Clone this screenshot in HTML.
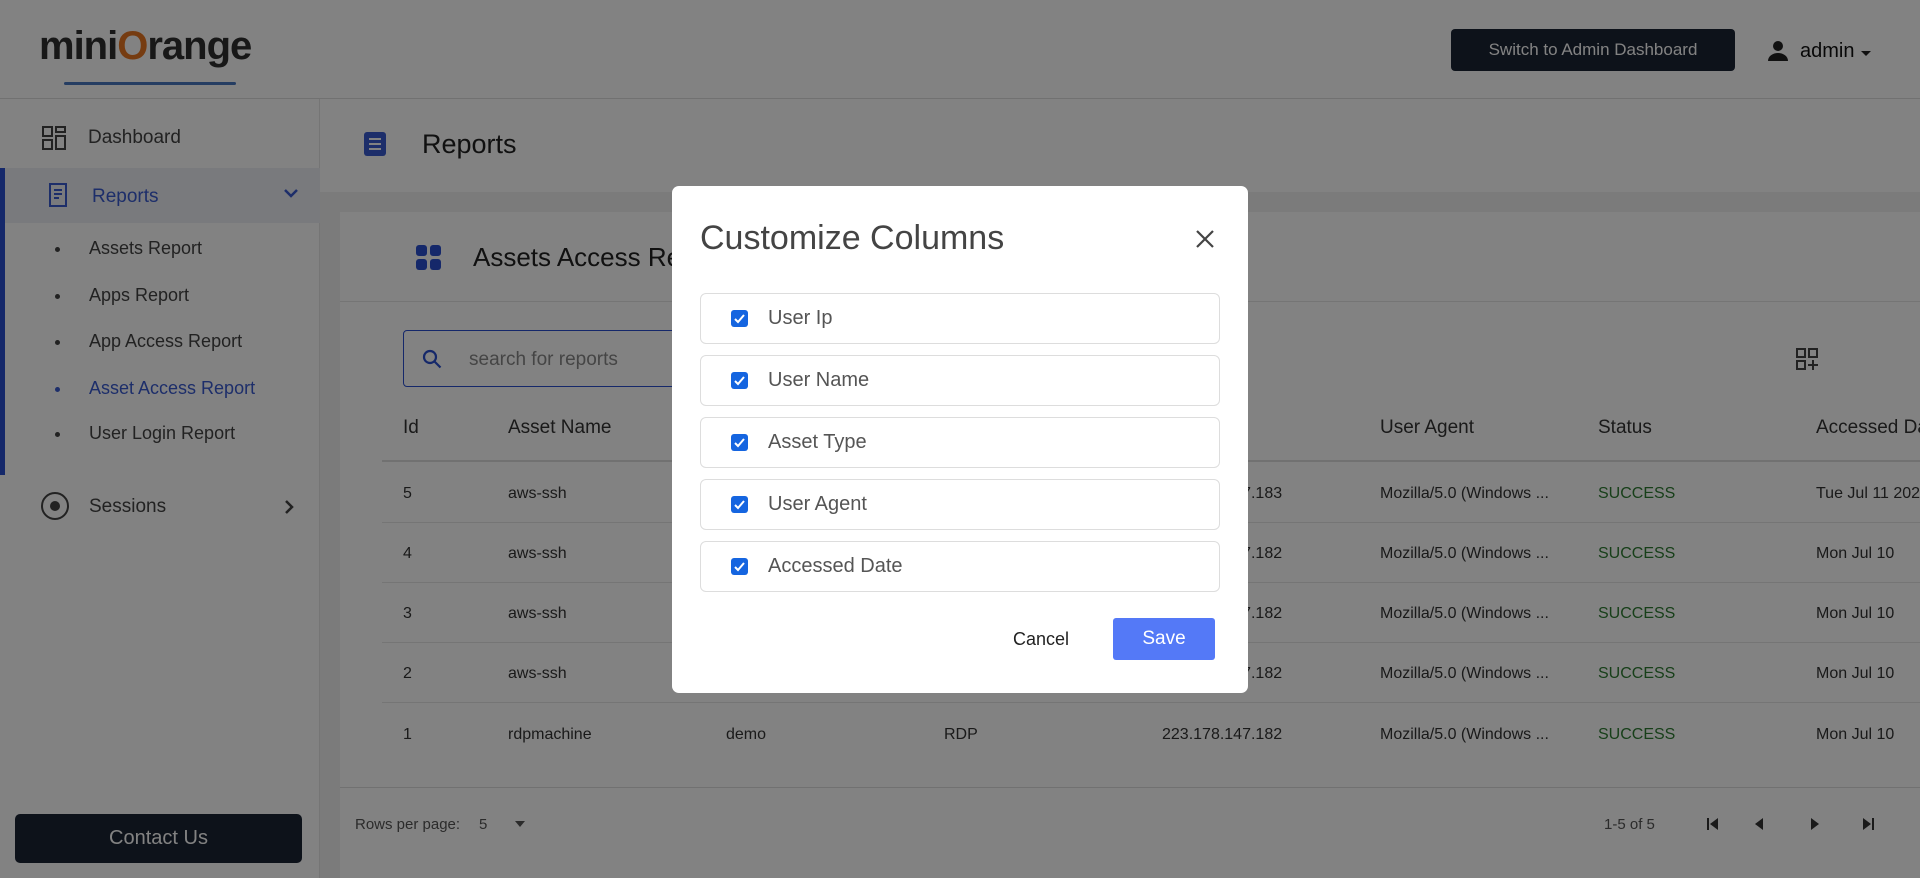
<!DOCTYPE html>
<html><head><meta charset="utf-8"><style>
*{box-sizing:border-box;margin:0;padding:0}
body{width:1920px;height:878px;overflow:hidden;position:relative;background:#fff;font-family:"Liberation Sans",sans-serif;color:#333}
.a{position:absolute}
.hdr{left:0;top:0;width:1920px;height:99px;background:#fff;border-bottom:1px solid #ddd}
.side{left:0;top:99px;width:320px;height:779px;background:#fff;border-right:1px solid #e6e6e6}
.main{left:320px;top:99px;width:1600px;height:779px;background:#f2f2f2}
.si{font-size:18px;color:#444;white-space:nowrap}
.dot{width:5px;height:5px;border-radius:50%;background:#444}
.th{font-size:19px;color:#333;white-space:nowrap}
.td{font-size:16px;color:#333;white-space:nowrap}
.ok{color:#2e7d32}
.line{height:1px;background:#e5e5e5}
.ov{left:0;top:0;width:1920px;height:878px;background:rgba(0,0,0,0.49)}
.modal{left:672px;top:186px;width:576px;height:507px;background:#fff;border-radius:7px}
.it{left:28px;width:520px;height:51px;border:1px solid #ddd;border-radius:6px}
.cb{left:30px;top:16px;width:17px;height:17px;background:#1565e0;border-radius:3px}
.it span{position:absolute;left:67px;top:13px;font-size:20px;color:#555}
</style></head><body>
<div class="a hdr">
 <div class="a" style="left:39px;top:24px;font-size:40px;font-weight:bold;color:#2f2f2f;letter-spacing:-1px">mini<span style="color:#e87722">O</span>range</div>
 <div class="a" style="left:64px;top:82px;width:172px;height:3px;background:#4a78c0;border-radius:2px"></div>
 <div class="a" style="left:1451px;top:29px;width:284px;height:42px;background:#1b2434;border-radius:4px;color:#fff;font-size:17px;text-align:center;line-height:42px">Switch to Admin Dashboard</div>
 <svg class="a" style="left:1766px;top:39px" width="24" height="24" viewBox="0 0 24 24"><circle cx="12" cy="7" r="5" fill="#222"/><path d="M2 22c0-5 5-8 10-8s10 3 10 8z" fill="#222"/></svg>
 <div class="a" style="left:1800px;top:40px;font-size:20px;color:#111">admin</div>
 <div class="a" style="left:1861px;top:51px;border:5px solid transparent;border-top:5px solid #222"></div>
</div>
<div class="a side">
 <svg class="a" style="left:42px;top:27px" width="24" height="24" viewBox="0 0 24 24" fill="none" stroke="#444" stroke-width="2"><rect x="1" y="1" width="9" height="9"/><rect x="14" y="1" width="9" height="5"/><rect x="14" y="10" width="9" height="13"/><rect x="1" y="14" width="9" height="9"/></svg>
 <div class="a si" style="left:88px;top:28px;font-size:19px">Dashboard</div>
 <div class="a" style="left:0;top:69px;width:320px;height:55px;background:#eef0f6"></div>
 <div class="a" style="left:0;top:69px;width:5px;height:307px;background:#2a4fd0"></div>
 <svg class="a" style="left:48px;top:84px" width="20" height="24" viewBox="0 0 20 24" fill="none" stroke="#3a5bd0" stroke-width="2"><path d="M2 1h16v22H2z M6 7h8 M6 11h8 M6 15h5"/></svg>
 <div class="a si" style="left:92px;top:87px;font-size:19px;color:#3a5bd0">Reports</div>
 <svg class="a" style="left:283px;top:88px" width="16" height="12" viewBox="0 0 16 12" fill="none" stroke="#3a5bd0" stroke-width="2.5"><path d="M2 3l6 6 6-6"/></svg>
 <div class="a dot" style="left:55px;top:148px"></div><div class="a si" style="left:89px;top:139px">Assets Report</div>
 <div class="a dot" style="left:55px;top:195px"></div><div class="a si" style="left:89px;top:186px">Apps Report</div>
 <div class="a dot" style="left:55px;top:241px"></div><div class="a si" style="left:89px;top:232px">App Access Report</div>
 <div class="a dot" style="left:55px;top:288px;background:#3a5bd0"></div><div class="a si" style="left:89px;top:279px;color:#3a5bd0">Asset Access Report</div>
 <div class="a dot" style="left:55px;top:333px"></div><div class="a si" style="left:89px;top:324px">User Login Report</div>
 <div class="a" style="left:41px;top:393px;width:28px;height:28px;border:2.5px solid #444;border-radius:50%"></div>
 <div class="a" style="left:50px;top:402px;width:10px;height:10px;background:#444;border-radius:50%"></div>
 <div class="a si" style="left:89px;top:397px;font-size:19px">Sessions</div>
 <svg class="a" style="left:283px;top:400px" width="12" height="16" viewBox="0 0 12 16" fill="none" stroke="#444" stroke-width="2.5"><path d="M3 2l6 6-6 6"/></svg>
 <div class="a" style="left:15px;top:715px;width:287px;height:49px;background:#1b2434;border-radius:5px;color:#fff;font-size:20px;text-align:center;line-height:49px">Contact Us</div>
</div>
<div class="a main">
 <div class="a" style="left:0;top:0;width:1600px;height:93px;background:#fff"></div>
 <div class="a" style="left:44px;top:33px;width:22px;height:24px;background:#3a5bd0;border-radius:3px"></div>
 <div class="a" style="left:49px;top:39px;width:12px;height:2px;background:#fff;box-shadow:0 5px 0 #fff,0 10px 0 #fff"></div>
 <div class="a" style="left:102px;top:30px;font-size:27px;color:#222">Reports</div>
 <div class="a" style="left:20px;top:113px;width:1600px;height:680px;background:#fff">
  <svg class="a" style="left:76px;top:33px" width="26" height="26" viewBox="0 0 26 26" fill="#2a4fd0"><rect x="0" y="0" width="11" height="11" rx="3"/><rect x="14" y="0" width="11" height="11" rx="3"/><rect x="0" y="14" width="11" height="11" rx="3"/><rect x="14" y="14" width="11" height="11" rx="3"/></svg>
  <div class="a" style="left:133px;top:30px;font-size:26px;color:#222">Assets Access Report</div>
  <div class="a line" style="left:0;top:89px;width:1600px"></div>
  <div class="a" style="left:63px;top:118px;width:300px;height:57px;border:1.5px solid #2a4fd0;border-radius:4px"></div>
  <svg class="a" style="left:82px;top:137px" width="20" height="20" viewBox="0 0 20 20" fill="none" stroke="#2a4fd0" stroke-width="2.2"><circle cx="8" cy="8" r="6"/><path d="M12.5 12.5l6 6"/></svg>
  <div class="a" style="left:129px;top:137px;font-size:19px;color:#888">search for reports</div>
  <svg class="a" style="left:1455px;top:135px" width="24" height="24" viewBox="0 0 24 24" fill="none" stroke="#444" stroke-width="2"><rect x="2" y="2" width="8" height="8"/><rect x="14" y="2" width="8" height="8"/><rect x="2" y="14" width="8" height="8"/><path d="M18 13v10M13 18h10"/></svg>
  <div class="a th" style="left:63px;top:205px">Id</div>
  <div class="a th" style="left:168px;top:205px">Asset Name</div>
  <div class="a th" style="left:386px;top:205px">User Name</div>
  <div class="a th" style="left:604px;top:205px">Asset Type</div>
  <div class="a th" style="left:822px;top:205px">User Ip</div>
  <div class="a th" style="left:1040px;top:205px">User Agent</div>
  <div class="a th" style="left:1258px;top:205px">Status</div>
  <div class="a th" style="left:1476px;top:205px">Accessed Date</div>
  <div class="a" style="left:42px;top:248px;width:1560px;height:2px;background:#ddd"></div>
 </div>
</div>
<div class="a" style="left:340px;top:482px;width:1580px;height:320px">
 <div class="a td" style="left:63px;top:3px">5</div><div class="a td" style="left:168px;top:3px">aws-ssh</div><div class="a td" style="left:386px;top:3px">demo</div><div class="a td" style="left:604px;top:3px">SSH</div><div class="a td" style="left:822px;top:3px">223.178.147.183</div><div class="a td" style="left:1040px;top:3px">Mozilla/5.0 (Windows ...</div><div class="a td ok" style="left:1258px;top:3px">SUCCESS</div><div class="a td" style="left:1476px;top:3px">Tue Jul 11 2023</div>
 <div class="a line" style="left:42px;top:40px;width:1560px"></div>
 <div class="a td" style="left:63px;top:63px">4</div><div class="a td" style="left:168px;top:63px">aws-ssh</div><div class="a td" style="left:386px;top:63px">demo</div><div class="a td" style="left:604px;top:63px">SSH</div><div class="a td" style="left:822px;top:63px">223.178.147.182</div><div class="a td" style="left:1040px;top:63px">Mozilla/5.0 (Windows ...</div><div class="a td ok" style="left:1258px;top:63px">SUCCESS</div><div class="a td" style="left:1476px;top:63px">Mon Jul 10</div>
 <div class="a line" style="left:42px;top:100px;width:1560px"></div>
 <div class="a td" style="left:63px;top:123px">3</div><div class="a td" style="left:168px;top:123px">aws-ssh</div><div class="a td" style="left:386px;top:123px">demo</div><div class="a td" style="left:604px;top:123px">SSH</div><div class="a td" style="left:822px;top:123px">223.178.147.182</div><div class="a td" style="left:1040px;top:123px">Mozilla/5.0 (Windows ...</div><div class="a td ok" style="left:1258px;top:123px">SUCCESS</div><div class="a td" style="left:1476px;top:123px">Mon Jul 10</div>
 <div class="a line" style="left:42px;top:160px;width:1560px"></div>
 <div class="a td" style="left:63px;top:183px">2</div><div class="a td" style="left:168px;top:183px">aws-ssh</div><div class="a td" style="left:386px;top:183px">demo</div><div class="a td" style="left:604px;top:183px">SSH</div><div class="a td" style="left:822px;top:183px">223.178.147.182</div><div class="a td" style="left:1040px;top:183px">Mozilla/5.0 (Windows ...</div><div class="a td ok" style="left:1258px;top:183px">SUCCESS</div><div class="a td" style="left:1476px;top:183px">Mon Jul 10</div>
 <div class="a line" style="left:42px;top:220px;width:1560px"></div>
 <div class="a td" style="left:63px;top:244px">1</div><div class="a td" style="left:168px;top:244px">rdpmachine</div><div class="a td" style="left:386px;top:244px">demo</div><div class="a td" style="left:604px;top:244px">RDP</div><div class="a td" style="left:822px;top:244px">223.178.147.182</div><div class="a td" style="left:1040px;top:244px">Mozilla/5.0 (Windows ...</div><div class="a td ok" style="left:1258px;top:244px">SUCCESS</div><div class="a td" style="left:1476px;top:244px">Mon Jul 10</div>
 <div class="a line" style="left:0;top:305px;width:1580px;background:#ddd"></div>
</div>
<div class="a" style="left:355px;top:816px;font-size:15px;color:#555">Rows per page:</div>
<div class="a" style="left:479px;top:816px;font-size:15px;color:#555">5</div>
<div class="a" style="left:515px;top:821px;border:5px solid transparent;border-top:6px solid #555"></div>
<div class="a" style="left:1604px;top:816px;font-size:15px;color:#555">1-5 of 5</div>
<svg class="a" style="left:1703px;top:814px" width="180" height="20" viewBox="0 0 180 20" fill="#333"><rect x="4" y="4" width="2" height="12"/><path d="M15 4v12l-8-6z"/><path d="M60 4v12l-8-6z"/><path d="M108 4v12l8-6z"/><path d="M160 4v12l8-6z"/><rect x="169" y="4" width="2" height="12"/></svg>
<div class="a ov"></div>
<div class="a modal">
 <div class="a" style="left:28px;top:33px;font-size:34px;color:#444">Customize Columns</div>
 <svg class="a" style="left:523px;top:43px" width="20" height="20" viewBox="0 0 20 20" stroke="#444" stroke-width="2.2"><path d="M2 2l16 16M18 2L2 18"/></svg>
 <div class="a it" style="top:107px"><div class="a cb"></div><svg class="a" style="left:32px;top:18px" width="13" height="13" viewBox="0 0 13 13" fill="none" stroke="#fff" stroke-width="2"><path d="M2 7l3 3 6-7"/></svg><span>User Ip</span></div>
 <div class="a it" style="top:169px"><div class="a cb"></div><svg class="a" style="left:32px;top:18px" width="13" height="13" viewBox="0 0 13 13" fill="none" stroke="#fff" stroke-width="2"><path d="M2 7l3 3 6-7"/></svg><span>User Name</span></div>
 <div class="a it" style="top:231px"><div class="a cb"></div><svg class="a" style="left:32px;top:18px" width="13" height="13" viewBox="0 0 13 13" fill="none" stroke="#fff" stroke-width="2"><path d="M2 7l3 3 6-7"/></svg><span>Asset Type</span></div>
 <div class="a it" style="top:293px"><div class="a cb"></div><svg class="a" style="left:32px;top:18px" width="13" height="13" viewBox="0 0 13 13" fill="none" stroke="#fff" stroke-width="2"><path d="M2 7l3 3 6-7"/></svg><span>User Agent</span></div>
 <div class="a it" style="top:355px"><div class="a cb"></div><svg class="a" style="left:32px;top:18px" width="13" height="13" viewBox="0 0 13 13" fill="none" stroke="#fff" stroke-width="2"><path d="M2 7l3 3 6-7"/></svg><span>Accessed Date</span></div>
 <div class="a" style="left:341px;top:443px;font-size:18px;color:#222">Cancel</div>
 <div class="a" style="left:441px;top:432px;width:102px;height:42px;background:#5479f7;border-radius:3px;color:#fff;font-size:19px;text-align:center;line-height:42px">Save</div>
</div>
</body></html>
